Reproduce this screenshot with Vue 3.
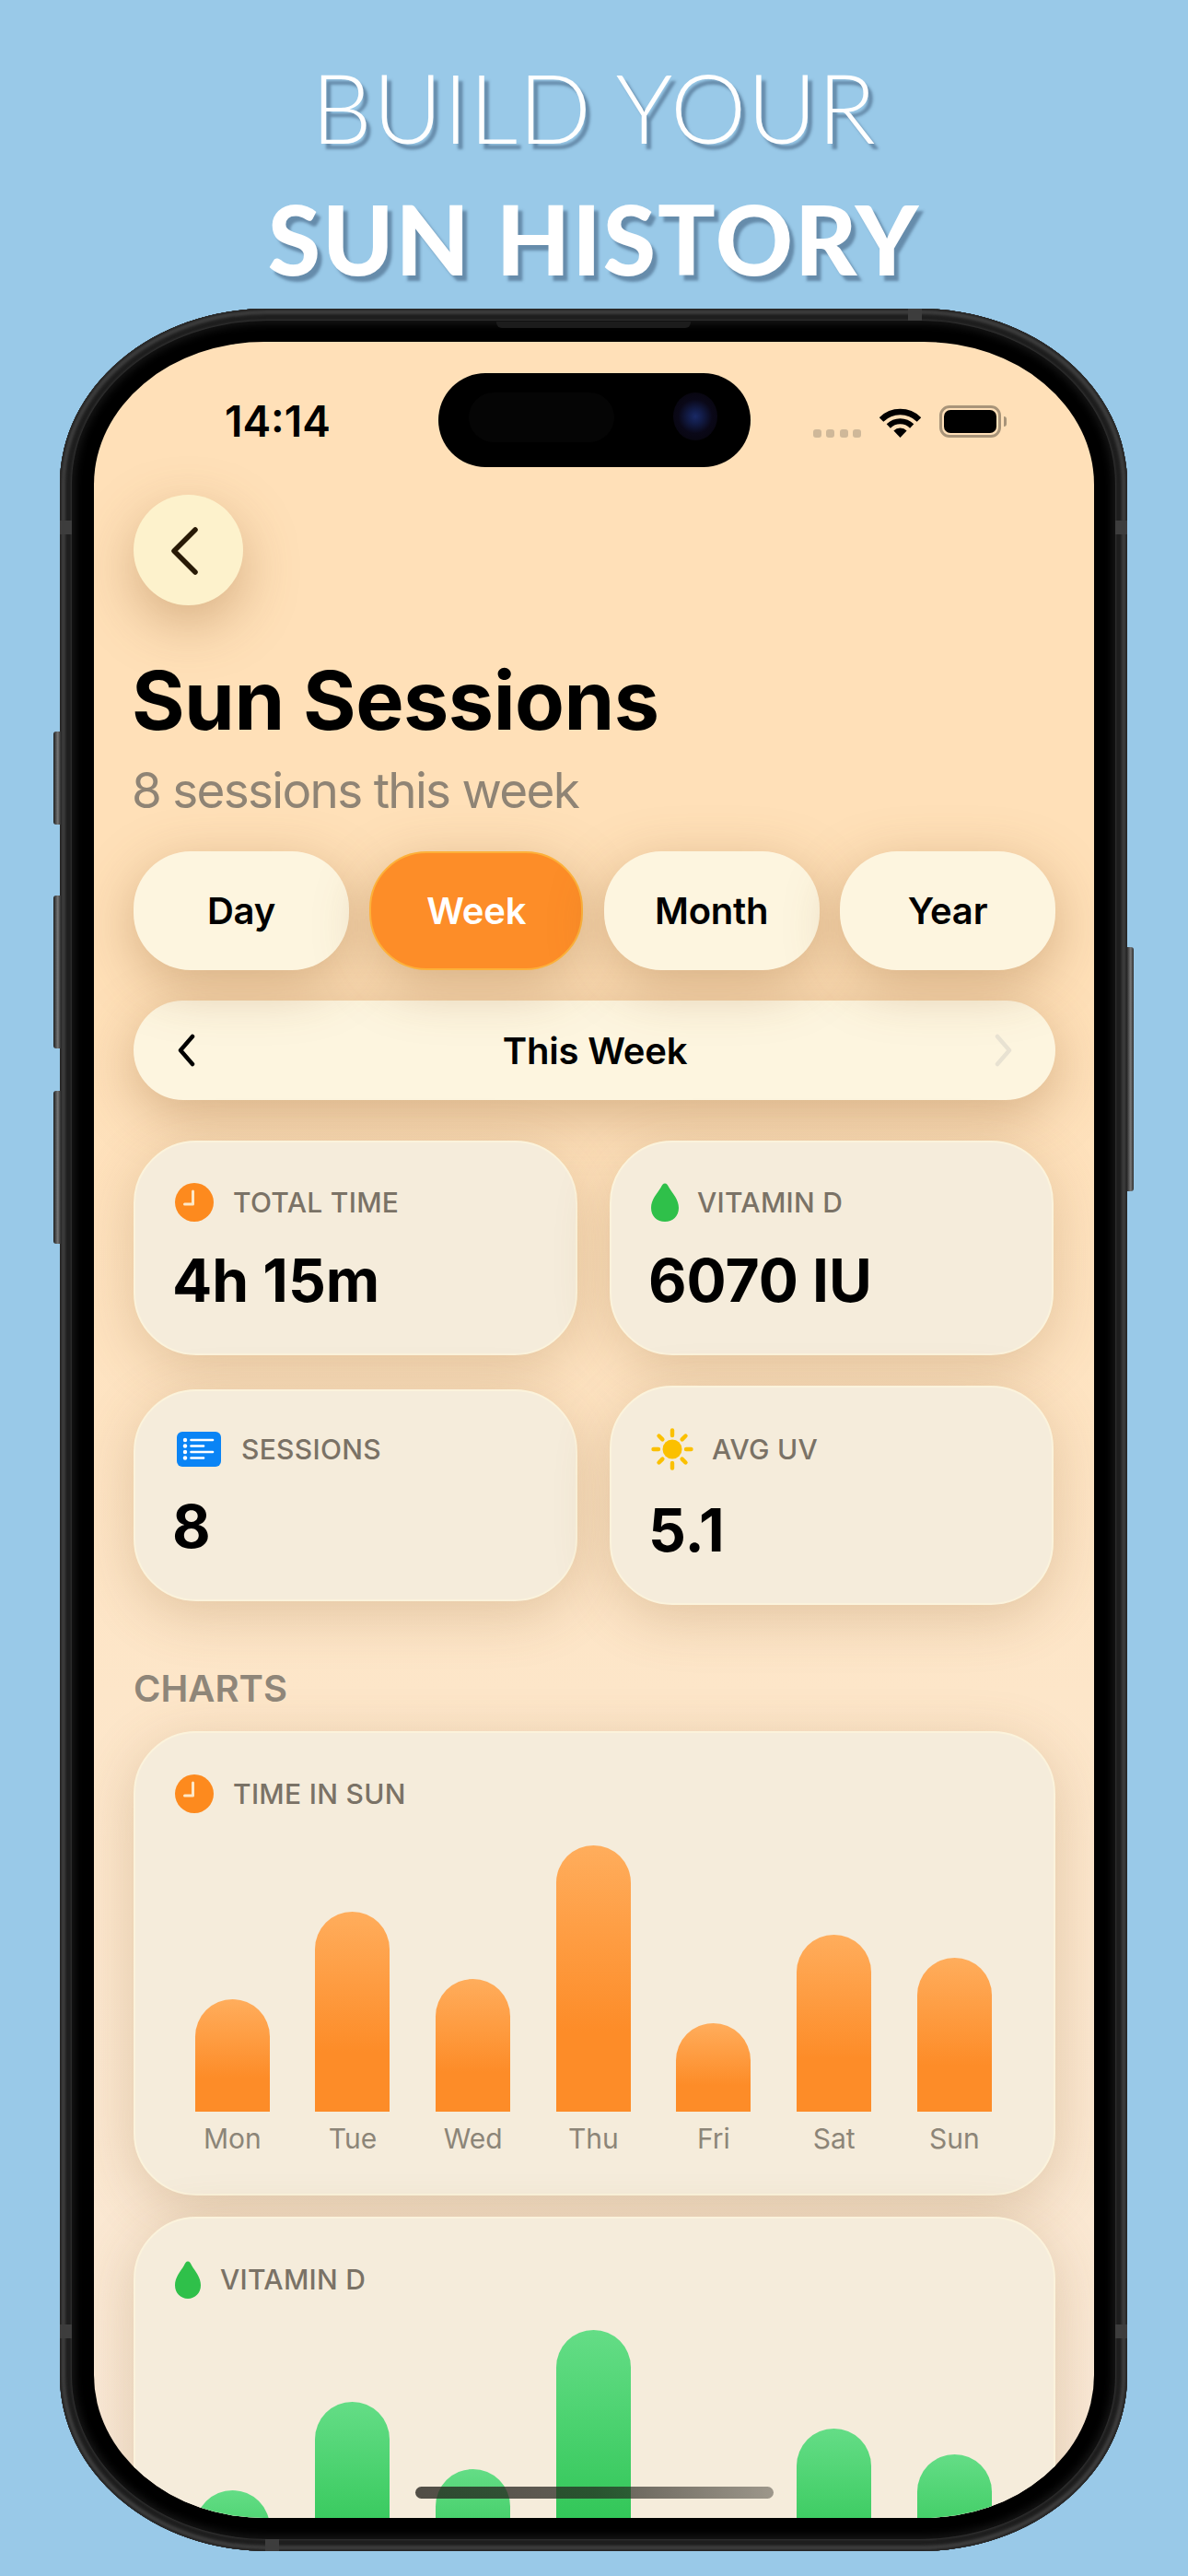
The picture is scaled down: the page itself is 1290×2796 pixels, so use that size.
<script setup>
const tabs = [
  { name: 'Day', active: false },
  { name: 'Week', active: true },
  { name: 'Month', active: false },
  { name: 'Year', active: false },
]
const days = ['Mon', 'Tue', 'Wed', 'Thu', 'Fri', 'Sat', 'Sun']
const sunBars = [122, 217, 144, 289, 96, 192, 167]
const vitBars = [116, 212, 139, 290, 60, 183, 155]
const dropPath = 'M15 .5C17 .5 18.2 2.5 19.5 5C23.5 11.5 30 18 30 27C30 36 23.5 42 15 42C6.5 42 0 36 0 27C0 18 6.5 11.5 10.5 5C11.8 2.5 13 .5 15 .5Z'
const rays = [0, 45, 90, 135, 180, 225, 270, 315]
</script>

<template>
  <div class="page">
    <header class="hero">
      <div class="hero-light">BUILD YOUR</div>
      <div class="hero-bold">SUN HISTORY</div>
    </header>

    <div class="phone">
      <i class="side-btn b1"></i><i class="side-btn b2"></i><i class="side-btn b3"></i><i class="side-btn b4"></i>
      <i class="band h top-band"></i><i class="band h bottom-band"></i>
      <i class="band v left-top"></i><i class="band v right-top"></i><i class="band v left-bot"></i><i class="band v right-bot"></i>
      <i class="speaker"></i>

      <div class="screen">
        <div class="island"><i class="sensor"></i><i class="lens"></i></div>
        <div class="home-bar"></div>

        <div class="status">
          <span class="time">14:14</span>
          <div class="status-right">
            <div class="dots"><i></i><i></i><i></i><i></i></div>
            <svg class="wifi" width="45" height="34" viewBox="0 0 45 34">
              <path d="M2 14.5A29 29 0 0 1 43 14.5" fill="none" stroke="#000" stroke-width="6.5" />
              <path d="M9.8 21.5A18 18 0 0 1 35.2 21.5" fill="none" stroke="#000" stroke-width="6" />
              <path d="M22.5 34L15.4 26.4A10 10 0 0 1 29.6 26.4Z" fill="#000" />
            </svg>
            <div class="battery-wrap">
              <div class="battery"><i></i></div>
              <i class="nub"></i>
            </div>
          </div>
        </div>

        <main class="content">
          <button class="back" type="button">
            <svg width="36" height="60" viewBox="0 0 36 60">
              <path d="M30 8L7 31L30 54" fill="none" stroke="#281a05" stroke-width="5.5" stroke-linecap="round" stroke-linejoin="round" />
            </svg>
          </button>

          <h1 class="title">Sun Sessions</h1>
          <p class="subtitle">8 sessions this week</p>

          <div class="tabs">
            <div v-for="t in tabs" :key="t.name" class="tab" :class="{ active: t.active }">{{ t.name }}</div>
          </div>

          <div class="period">
            <svg width="19" height="36" viewBox="0 0 19 36"><path d="M16 3L3 18L16 33" fill="none" stroke="#000" stroke-width="4.5" stroke-linecap="round" stroke-linejoin="round" /></svg>
            <span>This Week</span>
            <svg width="19" height="36" viewBox="0 0 19 36"><path d="M3 3L16 18L3 33" fill="none" stroke="#e8e2d2" stroke-width="4.5" stroke-linecap="round" stroke-linejoin="round" /></svg>
          </div>

          <div class="stats">
            <section class="card stat">
              <div class="head">
                <svg width="42" height="42" viewBox="0 0 42 42"><circle cx="21" cy="21" r="21" fill="#fd8a1e" /><path d="M19.5 9V23H10.5" fill="none" stroke="#fde8c8" stroke-width="3" stroke-linecap="round" stroke-linejoin="round" /></svg>
                <span class="label">TOTAL TIME</span>
              </div>
              <div class="value">4h 15m</div>
            </section>
            <section class="card stat">
              <div class="head drop">
                <svg width="30" height="42" viewBox="0 0 30 42"><path :d="dropPath" fill="#2fc04a" /></svg>
                <span class="label">VITAMIN D</span>
              </div>
              <div class="value">6070 IU</div>
            </section>
            <section class="card stat">
              <div class="head tight">
                <svg width="48" height="38" viewBox="0 0 48 38">
                  <rect width="48" height="38" rx="6" fill="#0a84f5" />
                  <g fill="#fff"><circle cx="9" cy="9" r="2.2" /><circle cx="9" cy="15.5" r="2.2" /><circle cx="9" cy="22" r="2.2" /><circle cx="9" cy="28.5" r="2.2" /></g>
                  <g stroke="#fff" stroke-width="2.6" stroke-linecap="round"><path d="M15.5 9H39" /><path d="M15.5 15.5H29" /><path d="M15.5 22H39" /><path d="M15.5 28.5H29" /></g>
                </svg>
                <span class="label">SESSIONS</span>
              </div>
              <div class="value">8</div>
            </section>
            <section class="card stat">
              <div class="head tall">
                <svg width="46" height="46" viewBox="0 0 46 46">
                  <circle cx="23" cy="23" r="10.5" fill="#fbc000" />
                  <path v-for="r in rays" :key="r" d="M23 2.5V8" stroke="#fbc000" stroke-width="4.4" stroke-linecap="round" :transform="`rotate(${r} 23 23)`" />
                </svg>
                <span class="label">AVG UV</span>
              </div>
              <div class="value">5.1</div>
            </section>
          </div>

          <h2 class="section">CHARTS</h2>

          <section class="card chart">
            <div class="head">
              <svg width="42" height="42" viewBox="0 0 42 42"><circle cx="21" cy="21" r="21" fill="#fd8a1e" /><path d="M19.5 9V23H10.5" fill="none" stroke="#fde8c8" stroke-width="3" stroke-linecap="round" stroke-linejoin="round" /></svg>
              <span class="label">TIME IN SUN</span>
            </div>
            <div class="plot">
              <div v-for="(d, i) in days" :key="d" class="col">
                <div class="bar orange" :style="{ height: sunBars[i] + 'px' }"></div>
              </div>
            </div>
            <div class="days"><span v-for="d in days" :key="d">{{ d }}</span></div>
          </section>

          <section class="card chart second">
            <div class="head">
              <svg width="28" height="41" viewBox="0 0 30 42" preserveAspectRatio="none"><path :d="dropPath" fill="#2fc04a" /></svg>
              <span class="label">VITAMIN D</span>
            </div>
            <div class="plot">
              <div v-for="(d, i) in days" :key="d" class="col">
                <div class="bar green" :style="{ height: vitBars[i] + 'px' }"></div>
              </div>
            </div>
          </section>
        </main>
      </div>
    </div>
  </div>
</template>

<style>
html, body { margin: 0; padding: 0; background: #99c9e8; }
</style>

<style scoped>
.page {
  width: 1290px;
  height: 2796px;
  overflow: hidden;
  background: #99c9e8;
  font-family: Inter, "Liberation Sans", sans-serif;
}
.hero {
  height: 335px;
  box-sizing: border-box;
  padding-top: 44px;
  text-align: center;
  color: #fff;
  font-family: Lato, "Open Sans", sans-serif;
  font-size: 104px;
  line-height: 143px;
  text-shadow: 5px 6px 3px rgba(60, 90, 120, 0.55);
}
.hero-light { font-weight: 300; letter-spacing: 1px; }
.hero-bold { font-weight: 900; letter-spacing: 2px; }

.phone {
  position: relative;
  width: 1159px;
  height: 2434px;
  margin-left: 65px;
  box-sizing: border-box;
  padding: 36px 37px;
  background: #000;
  border-radius: 225px / 190px;
  box-shadow:
    inset 0 0 2px 2px #262626,
    inset 0 0 3px 6px #3e3e3e,
    inset 0 0 2px 12px #1e1e1e,
    inset 0 0 0 13px #333,
    inset 0 0 10px 16px #181818;
}
.side-btn {
  position: absolute;
  width: 8px;
  background: linear-gradient(90deg, #1e1e1e, #777 60%, #2c2c2c);
  border-radius: 3px 0 0 3px;
}
.b1 { left: -7px; top: 459px; height: 101px; }
.b2 { left: -7px; top: 637px; height: 166px; }
.b3 { left: -7px; top: 849px; height: 166px; }
.b4 { right: -7px; top: 693px; height: 265px; border-radius: 0 3px 3px 0; }
.band { position: absolute; background: #3d3d3d; }
.band.h { width: 15px; height: 13px; }
.band.v { width: 13px; height: 15px; }
.top-band { left: 921px; top: 0; }
.bottom-band { left: 223px; bottom: 0; }
.left-top { left: 0; top: 230px; }
.right-top { right: 0; top: 230px; }
.left-bot { left: 0; top: 2188px; }
.right-bot { right: 0; top: 2188px; }
.speaker {
  position: absolute;
  left: 474px;
  top: 14px;
  width: 211px;
  height: 7px;
  background: #1c1c1c;
  border-radius: 0 0 6px 6px;
}

.screen {
  position: relative;
  width: 1086px;
  height: 2362px;
  overflow: hidden;
  border-radius: 185px / 155px;
  background: linear-gradient(180deg, #ffe0b8 0%, #ffe0b8 30%, #fde6c9 62%, #f9e9d7 100%);
}
.island {
  position: absolute;
  z-index: 3;
  left: 374px;
  top: 34px;
  width: 339px;
  height: 102px;
  background: #000;
  border-radius: 51px;
}
.sensor {
  position: absolute;
  left: 33px;
  top: 21px;
  width: 158px;
  height: 54px;
  border-radius: 27px;
  background: #050505;
}
.lens {
  position: absolute;
  left: 255px;
  top: 21px;
  width: 48px;
  height: 52px;
  border-radius: 50%;
  background: radial-gradient(circle, #1a2a66 0, #121c48 22%, #0a0818 52%, #060408 100%);
}
.home-bar {
  position: absolute;
  z-index: 3;
  left: 349px;
  bottom: 21px;
  width: 389px;
  height: 13px;
  border-radius: 7px;
  background: linear-gradient(90deg, rgba(35, 33, 28, 0.78), rgba(35, 33, 28, 0.7) 50%, rgba(35, 33, 28, 0.42));
}

.status {
  height: 166px;
  box-sizing: border-box;
  padding: 69px 95px 0 142px;
  display: flex;
  justify-content: space-between;
  align-items: flex-start;
}
.time {
  font-size: 46px;
  font-weight: 600;
  line-height: 35px;
  color: #000;
}
.status-right {
  display: flex;
  align-items: flex-end;
  gap: 20px;
  height: 35px;
}
.dots { display: flex; gap: 5.3px; }
.dots i {
  width: 9px;
  height: 9px;
  border-radius: 3px;
  background: #cfb899;
}
.wifi { display: block; }
.battery-wrap { display: flex; align-items: center; gap: 3px; }
.battery {
  width: 67px;
  height: 35px;
  box-sizing: border-box;
  border: 3px solid #a89479;
  border-radius: 11px;
  padding: 2px;
}
.battery i {
  display: block;
  width: 100%;
  height: 100%;
  background: #000;
  border-radius: 7px;
}
.nub {
  width: 3px;
  height: 11px;
  background: #a89479;
  border-radius: 0 3px 3px 0;
}

.content { padding: 0 42px 0 43px; }
.back {
  display: flex;
  align-items: center;
  justify-content: center;
  width: 119px;
  height: 120px;
  padding: 0 10px 0 0;
  border: 0;
  border-radius: 50%;
  background: #fdf2cc;
  box-shadow: 0 20px 60px rgba(140, 90, 40, 0.36);
}
.title {
  margin: 53px 0 0 -2px;
  font-size: 88px;
  font-weight: 700;
  line-height: 100px;
  letter-spacing: -0.5px;
  color: #000;
}
.subtitle {
  margin: 18px 0 0 -2px;
  font-size: 53px;
  font-weight: 400;
  line-height: 60px;
  letter-spacing: -1.7px;
  color: #8f8475;
}
.tabs {
  display: grid;
  grid-template-columns: 234px 232px 234px 234px;
  column-gap: 22.33px;
  margin-top: 36px;
}
.tab {
  height: 129px;
  box-sizing: border-box;
  display: flex;
  align-items: center;
  justify-content: center;
  border-radius: 62px;
  background: #fdf5df;
  font-size: 40px;
  font-weight: 600;
  letter-spacing: -0.2px;
  color: #000;
  box-shadow: 0 16px 60px rgba(140, 90, 40, 0.36);
}
.tab.active {
  background: #fd8d28;
  border: 2px solid #fdb13a;
  color: #fff;
}
.period {
  margin-top: 33px;
  height: 108px;
  box-sizing: border-box;
  padding: 0 47px 0 48px;
  display: flex;
  align-items: center;
  justify-content: space-between;
  border-radius: 54px;
  background: #fdf5df;
  font-size: 40px;
  font-weight: 600;
  letter-spacing: -0.2px;
  color: #000;
  box-shadow: 0 16px 60px rgba(140, 90, 40, 0.36);
}
.period svg { display: block; }
.card {
  box-sizing: border-box;
  background: #f5ecdb;
  border: 2px solid #fbf3dc;
  border-radius: 68px;
  box-shadow: 0 14px 60px rgba(140, 90, 40, 0.24);
}
.stats {
  display: grid;
  grid-template-columns: 482px 482px;
  column-gap: 35px;
  row-gap: 33px;
  align-items: center;
  margin-top: 44px;
}
.stat { padding: 44px 20px 47px 43px; }
.head {
  display: flex;
  align-items: center;
  gap: 21px;
}
.head svg { display: block; flex: none; }
.head.drop { gap: 20px; }
.head.tight { gap: 22px; }
.head.tall { gap: 20px; }
.head.tight svg { margin-left: 2px; }
.label {
  font-size: 30px;
  font-weight: 500;
  letter-spacing: 0.3px;
  color: #7a7266;
}
.value {
  margin: 32px 0 0 -3px;
  font-size: 64px;
  font-weight: 700;
  line-height: 64px;
  color: #000;
}
.head.tight + .value,
.head.tall + .value { margin-top: 33px; }
.section {
  margin: 68px 0 0;
  font-size: 40px;
  font-weight: 600;
  line-height: 46px;
  color: #8f8679;
}
.chart {
  margin-top: 23px;
  padding: 45px 38px 42px 43px;
}
.chart .head { height: 42px; }
.second { margin-top: 23px; }
.plot {
  display: grid;
  grid-template-columns: repeat(7, 130.67px);
  height: 324px;
  margin-left: -3px;
  align-items: end;
}
.col { display: flex; justify-content: center; }
.bar {
  width: 81px;
  border-radius: 41px 41px 0 0;
}
.orange { background: linear-gradient(180deg, #ffad5c 0, #fd8c28 70%, #fd8c28 100%); }
.green { background: linear-gradient(180deg, #64dd86 0, #33c759 70%, #33c759 100%); }
.days {
  display: grid;
  grid-template-columns: repeat(7, 130.67px);
  margin: 11px 0 0 -3px;
  font-size: 30px;
  line-height: 36px;
  font-weight: 400;
  text-align: center;
  color: #8c8578;
}
</style>
